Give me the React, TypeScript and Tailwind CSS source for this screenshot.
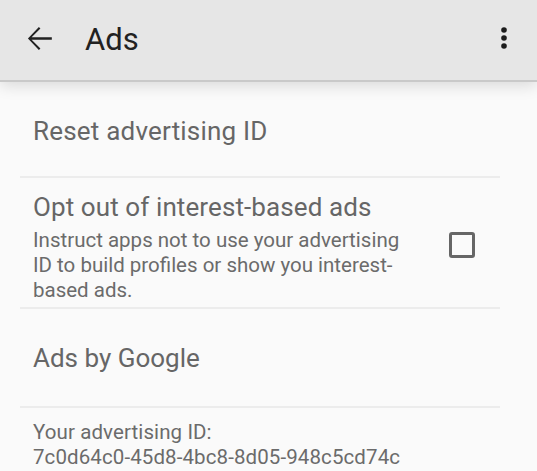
import React from "react";

function BackArrow() {
  return (
    <svg width="37" height="37" viewBox="0 0 24 24" className="shrink-0">
      <path
        fill="#222222"
        d="M20 11.2H6.9l5.7-5.7-1-1L4.5 12l7.1 7.5 1-1-5.7-5.7H20z"
      />
    </svg>
  );
}

function MoreVert() {
  return (
    <svg width="32" height="32" viewBox="0 0 24 24" className="shrink-0">
      <circle cx="12" cy="6" r="2.1" fill="#1c1c1c" />
      <circle cx="12" cy="12" r="2.1" fill="#1c1c1c" />
      <circle cx="12" cy="18" r="2.1" fill="#1c1c1c" />
    </svg>
  );
}

function Divider() {
  return <div className="ml-5 mr-[37px] h-[2px] bg-[#ececec]" />;
}

export default function App() {
  return (
    <div
      className="h-[471px] w-[537px] overflow-hidden bg-[#fafafa]"
      style={{ fontFamily: "Roboto, 'Liberation Sans', sans-serif" }}
    >
      {/* Toolbar */}
      <header className="relative z-10 flex h-[82px] items-center border-b-2 border-[#c9c9c9] bg-[#e6e6e6] pl-[21px] pr-[17px] shadow-[0_4px_14px_rgba(0,0,0,0.13)]">
        <div className="-mt-[4px]">
          <BackArrow />
        </div>
        <h1 className="ml-[27px] -mt-[2px] text-[31px] leading-none text-[#212121]">Ads</h1>
        <div className="ml-auto -mt-[4px]">
          <MoreVert />
        </div>
      </header>

      {/* Reset advertising ID */}
      <div className="pl-[33px] pb-[29px] pt-[33px] text-[26px] leading-[32px] tracking-[0.2px] text-[#666666]">
        Reset advertising ID
      </div>
      <Divider />

      {/* Opt out */}
      <div className="flex items-center pl-[33px] pr-[62px] pt-[13px] pb-[4px]">
        <div className="w-[380px]">
          <div className="text-[26px] leading-[32px] tracking-[0.1px] text-[#666666]">
            Opt out of interest-based ads
          </div>
          <p className="mt-[5px] text-[20.5px] leading-[25px] text-[#6b6b6b]">
            Instruct apps not to use your advertising ID to build profiles or show you interest-based ads.
          </p>
        </div>
        <div className="ml-auto -mt-[4px] h-[26px] w-[26px] rounded-[3px] border-[3px] border-[#666666]" />
      </div>
      <Divider />

      {/* Ads by Google */}
      <div className="pl-[33px] pb-[32px] pt-[33px] text-[26px] leading-[32px] text-[#666666]">
        Ads by Google
      </div>
      <Divider />

      {/* Advertising ID */}
      <div className="pl-[33px] pt-[12px] text-[20.5px] leading-[25px] tracking-[0.1px] text-[#6b6b6b]">
        <div>Your advertising ID:</div>
        <div>7c0d64c0-45d8-4bc8-8d05-948c5cd74c</div>
      </div>
    </div>
  );
}
